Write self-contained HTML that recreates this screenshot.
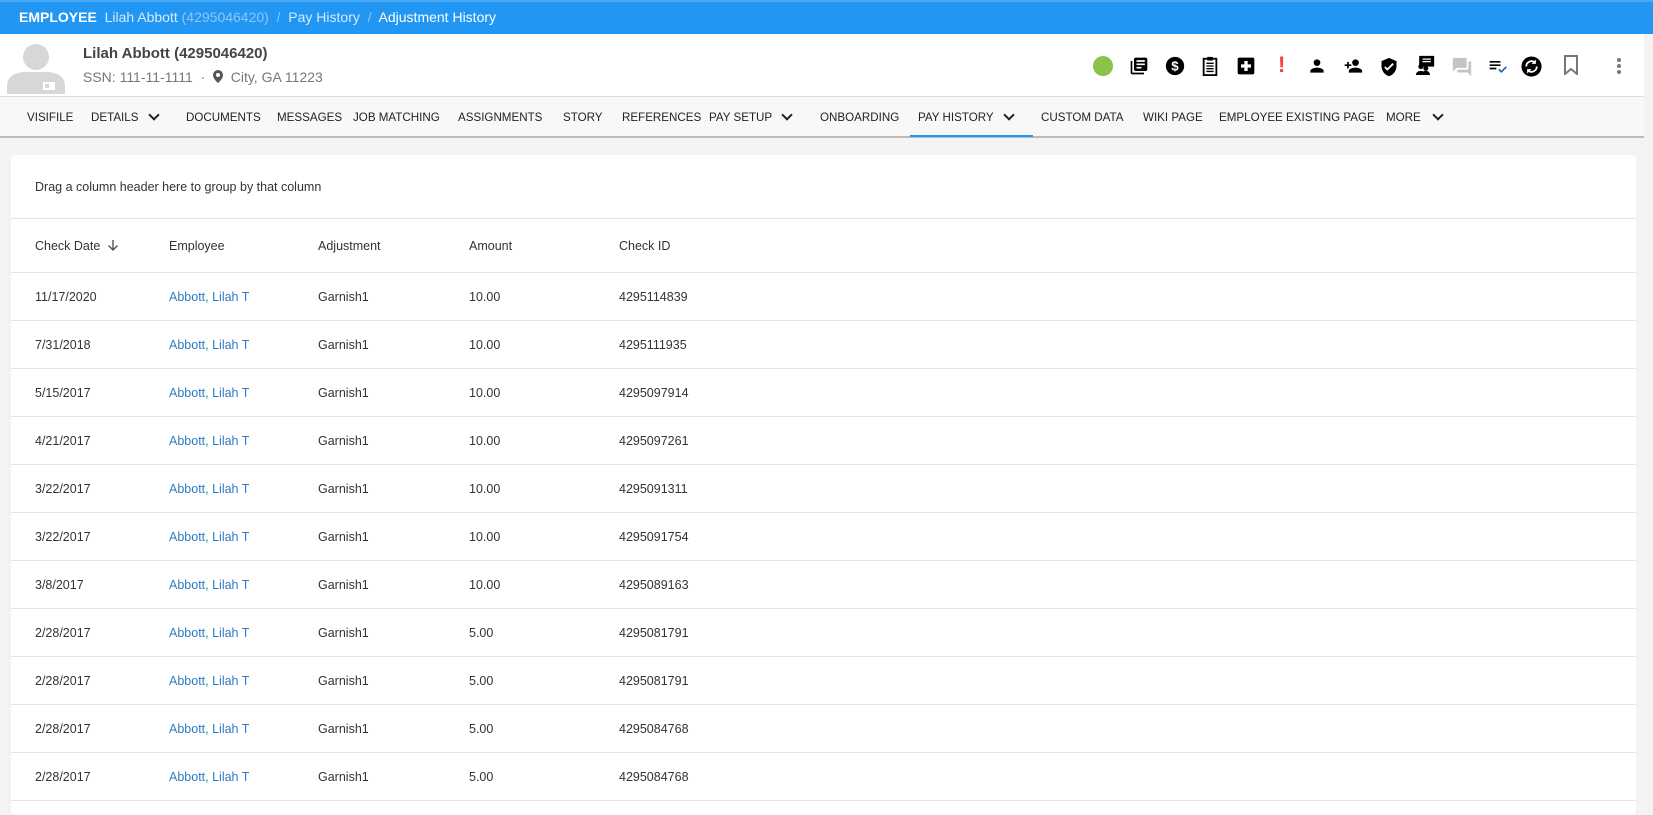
<!DOCTYPE html>
<html><head><meta charset="utf-8"><style>
*{margin:0;padding:0;box-sizing:border-box}
body{width:1653px;height:802px;overflow:hidden;background:#f3f3f3;font-family:"Liberation Sans",sans-serif;position:relative}
.a{position:absolute;white-space:nowrap}
#top{position:absolute;left:0;top:0;width:1653px;height:34px;background:#2196f3;border-top:2px solid #4aa9f5}
#hdr{position:absolute;left:0;top:34px;width:1644px;height:63px;background:#fff;border-bottom:1px solid #ddd}
#nav{position:absolute;left:0;top:97px;width:1644px;height:41px;background:#f8f8f8;border-bottom:2px solid #bbb}
.n{position:absolute;line-height:29px;height:29px;top:103px;font-size:11.6px;color:#222;white-space:nowrap}
.ch{position:absolute;top:111px;width:8px;height:8px;border-right:2px solid #222;border-bottom:2px solid #222;transform:rotate(45deg)}
#card{position:absolute;left:11px;top:155px;width:1625px;height:660px;background:#fff;border-radius:4px}
.hl{position:absolute;left:11px;width:1625px;height:1px;background:#e3e3e3}
.c{position:absolute;font-size:12.5px;color:#333;line-height:16px;white-space:nowrap}
.l{color:#2f7bbf}
.ic{position:absolute;top:56px}
</style></head><body>
<div id="top"></div>
<div class="a" style="left:19px;top:9px;font-size:14px;color:#fff;line-height:17px"><b>EMPLOYEE</b>&nbsp; <span style="color:#d6eafc">Lilah Abbott</span> <span style="color:#8fc6f6">(4295046420)</span> <span style="color:#8fc6f6">&nbsp;/&nbsp;</span> <span style="color:#d6eafc">Pay History</span> <span style="color:#8fc6f6">&nbsp;/&nbsp;</span> Adjustment History</div>
<div id="hdr"></div>
<svg class="a" style="left:7px;top:40px" width="58" height="54" viewBox="0 0 58 54"><circle cx="29" cy="17" r="13" fill="#d7d7d7"/><path d="M0 54 V46 Q0 34 16 32 H42 Q58 34 58 46 V54Z" fill="#d7d7d7"/><rect x="36" y="42" width="12" height="8" fill="#fff"/><rect x="38" y="44" width="4" height="4" fill="#d7d7d7"/></svg>
<div class="a" style="left:83px;top:45px;font-size:15px;font-weight:bold;color:#444">Lilah Abbott (4295046420)</div>
<div class="a" style="left:83px;top:69px;font-size:14px;color:#777">SSN: 111-11-1111 &nbsp;·&nbsp; <svg width="10" height="13" viewBox="0 0 10 13" style="vertical-align:-1px"><path d="M5 0A5 5 0 0 0 0 5C0 9 5 13 5 13S10 9 10 5A5 5 0 0 0 5 0Z" fill="#555"/><circle cx="5" cy="5" r="2" fill="#fff"/></svg>&nbsp; City, GA 11223</div>
<div class="a" style="left:1093px;top:56px;width:20px;height:20px;border-radius:50%;background:#8bc34a"></div>
<svg class="ic" style="left:1129px" width="20" height="20" viewBox="0 0 24 24"><path d="M4 6H2v14c0 1.1.9 2 2 2h14v-2H4V6zm16-4H8c-1.1 0-2 .9-2 2v12c0 1.1.9 2 2 2h12c1.1 0 2-.9 2-2V4c0-1.1-.9-2-2-2zm-1 9H9V9h10v2zm-4 4H9v-2h6v2zm4-8H9V5h10v2z"/></svg>
<svg class="ic" style="left:1165px" width="20" height="20" viewBox="0 0 24 24"><circle cx="12" cy="12" r="11"/><text x="12" y="17.5" font-size="16" font-weight="bold" text-anchor="middle" fill="#fff" font-family="Liberation Sans">$</text></svg>
<svg class="ic" style="left:1201px" width="18" height="20" viewBox="0 0 18 22"><rect x="2" y="3" width="14" height="18" fill="none" stroke="#000" stroke-width="2"/><rect x="6" y="1" width="6" height="4" fill="#000"/><path d="M5 8h8M5 11h8M5 14h8M5 17h8" stroke="#000" stroke-width="1.5"/></svg>
<svg class="ic" style="left:1236px" width="20" height="20" viewBox="0 0 24 24"><rect x="2" y="2" width="20" height="20" rx="2"/><path d="M10 6h4v4h4v4h-4v4h-4v-4H6v-4h4z" fill="#fff"/></svg>
<div class="a" style="left:1278px;top:52px;font-size:22px;font-weight:bold;color:#f44336">!</div>
<svg class="ic" style="left:1307px" width="20" height="20" viewBox="0 0 24 24"><circle cx="12" cy="8" r="4"/><path d="M4 20v-2c0-2.7 5.3-4 8-4s8 1.3 8 4v2z"/></svg>
<svg class="ic" style="left:1341px" width="24" height="20" viewBox="0 0 24 24"><circle cx="15" cy="8" r="4"/><path d="M7 20v-2c0-2.7 5.3-4 8-4s8 1.3 8 4v2z M5 7v3H2v2h3v3h2v-3h3v-2H7V7z"/></svg>
<svg class="ic" style="left:1379px" width="20" height="22" viewBox="0 0 24 24"><path d="M12 1L3 5v6c0 5.5 3.8 10.7 9 12 5.2-1.3 9-6.5 9-12V5z"/><path d="M7 12l3 3 7-7" stroke="#fff" stroke-width="2.2" fill="none"/></svg>
<svg class="ic" style="left:1415px;top:54px" width="20" height="22" viewBox="0 0 24 24"><rect x="5" y="1" width="18" height="13" rx="1"/><path d="M9 5h10M9 8h10" stroke="#fff" stroke-width="1.5"/><circle cx="7" cy="14" r="3"/><circle cx="13" cy="16" r="3"/><path d="M1 24c0-3 3-5 6-5s6 2 6 5zM8 24c0-3 2-5 5-5s5 2 5 5z"/></svg>
<svg class="ic" style="left:1451px" width="22" height="22" viewBox="0 0 24 24"><path d="M2 2h15v11H6l-4 4z" fill="#c4c4c4"/><path d="M7 15h12V6h3v16l-4-4H7z" fill="#c4c4c4"/></svg>
<svg class="ic" style="left:1487px" width="22" height="20" viewBox="0 0 24 24"><path d="M2 7h13M2 11h13M2 15h8" stroke="#000" stroke-width="2"/><path d="M13 16l3 3 6-6" stroke="#1565c0" stroke-width="2" fill="none"/></svg>
<svg class="ic" style="left:1521px" width="21" height="21" viewBox="0 0 24 24"><circle cx="12" cy="12" r="11.5"/><path d="M6 12a6 6 0 0 1 10-4.5M18 12a6 6 0 0 1-10 4.5" stroke="#fff" stroke-width="2" fill="none"/><path d="M17 4v5h-5zM7 20v-5h5z" fill="#fff"/></svg>
<svg class="ic" style="left:1563px;top:55px" width="16" height="20" viewBox="0 0 16 20"><path d="M2 1h12v18l-6-5-6 5z" fill="none" stroke="#777" stroke-width="2"/></svg>
<svg class="ic" style="left:1615px" width="8" height="20" viewBox="0 0 8 20"><circle cx="4" cy="4" r="2" fill="#777"/><circle cx="4" cy="10" r="2" fill="#777"/><circle cx="4" cy="16" r="2" fill="#777"/></svg>
<div id="nav"></div>
<div class="n" style="left:27px">VISIFILE</div>
<div class="n" style="left:91px">DETAILS</div><div class="ch" style="left:150px"></div>
<div class="n" style="left:186px">DOCUMENTS</div>
<div class="n" style="left:277px">MESSAGES</div>
<div class="n" style="left:353px">JOB MATCHING</div>
<div class="n" style="left:458px">ASSIGNMENTS</div>
<div class="n" style="left:563px">STORY</div>
<div class="n" style="left:622px">REFERENCES</div>
<div class="n" style="left:709px">PAY SETUP</div><div class="ch" style="left:783px"></div>
<div class="n" style="left:820px">ONBOARDING</div>
<div class="n" style="left:918px">PAY HISTORY</div><div class="ch" style="left:1005px"></div>
<div class="a" style="left:910px;top:135px;width:123px;height:2px;background:#2196f3"></div>
<div class="n" style="left:1041px">CUSTOM DATA</div>
<div class="n" style="left:1143px">WIKI PAGE</div>
<div class="n" style="left:1219px">EMPLOYEE EXISTING PAGE</div>
<div class="n" style="left:1386px">MORE</div><div class="ch" style="left:1434px"></div>
<div id="card"></div>
<div class="c" style="left:35px;top:179px;font-size:12.5px">Drag a column header here to group by that column</div>
<div class="hl" style="top:218px"></div>
<div class="c" style="left:35px;top:238px">Check Date <svg width="12" height="12" viewBox="0 0 12 12" style="vertical-align:-1px;margin-left:3px"><path d="M6 1v10M1.5 6.5L6 11l4.5-4.5" stroke="#555" stroke-width="1.4" fill="none"/></svg></div>
<div class="c" style="left:169px;top:238px">Employee</div>
<div class="c" style="left:318px;top:238px">Adjustment</div>
<div class="c" style="left:469px;top:238px">Amount</div>
<div class="c" style="left:619px;top:238px">Check ID</div>
<div class="hl" style="top:272px"></div>
<div id="rows"></div>
<script>
var d=[["11/17/2020","10.00","4295114839"],["7/31/2018","10.00","4295111935"],["5/15/2017","10.00","4295097914"],["4/21/2017","10.00","4295097261"],["3/22/2017","10.00","4295091311"],["3/22/2017","10.00","4295091754"],["3/8/2017","10.00","4295089163"],["2/28/2017","5.00","4295081791"],["2/28/2017","5.00","4295081791"],["2/28/2017","5.00","4295084768"],["2/28/2017","5.00","4295084768"]];
var h="";d.forEach(function(r,i){var t=289+i*48;
h+='<div class="c" style="left:35px;top:'+t+'px">'+r[0]+'</div><div class="c l" style="left:169px;top:'+t+'px">Abbott, Lilah T</div><div class="c" style="left:318px;top:'+t+'px">Garnish1</div><div class="c" style="left:469px;top:'+t+'px">'+r[1]+'</div><div class="c" style="left:619px;top:'+t+'px">'+r[2]+'</div><div class="hl" style="top:'+(320+i*48)+'px"></div>';});
document.getElementById("rows").innerHTML=h;
</script>
</body></html>
